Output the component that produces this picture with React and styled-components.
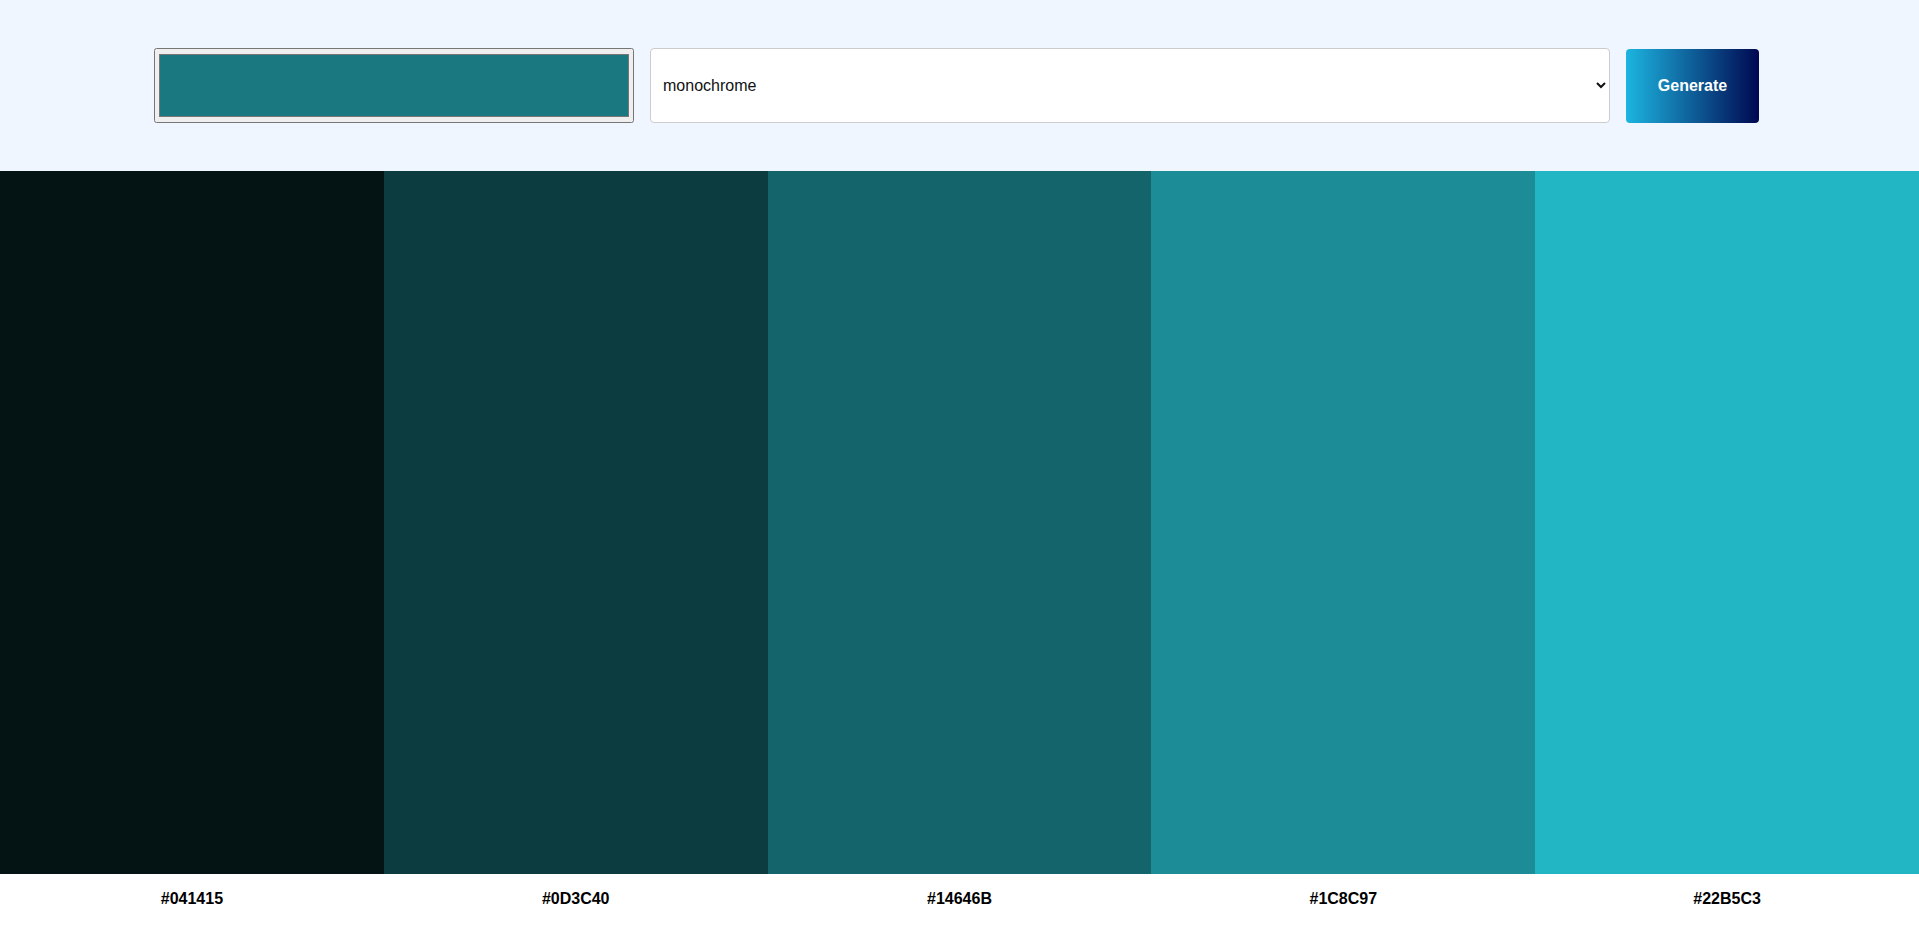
import React, { useState } from "react";
import styled, { createGlobalStyle } from "styled-components";

const GlobalStyle = createGlobalStyle`
  body {
    margin: 0;
    font-family: "Liberation Sans", Arial, sans-serif;
    background: #ffffff;
  }
`;

const palette = ["#041415", "#0D3C40", "#14646B", "#1C8C97", "#22B5C3"];

export default function App() {
  const [color, setColor] = useState("#1a7980");
  const [mode, setMode] = useState("monochrome");

  return (
    <>
      <GlobalStyle />
      <Header>
        <ColorPicker type="color" value={color} onChange={(e) => setColor(e.target.value)} />
        <ModeSelect value={mode} onChange={(e) => setMode(e.target.value)}>
          <option value="monochrome">monochrome</option>
          <option value="monochrome-dark">monochrome-dark</option>
          <option value="monochrome-light">monochrome-light</option>
          <option value="analogic">analogic</option>
          <option value="complement">complement</option>
          <option value="triad">triad</option>
        </ModeSelect>
        <GenerateButton>Generate</GenerateButton>
      </Header>
      <Palette>
        {palette.map((hex) => (
          <Column key={hex}>
            <Swatch $color={hex} />
            <HexLabel>{hex}</HexLabel>
          </Column>
        ))}
      </Palette>
    </>
  );
}

const Header = styled.header`
  background: #eff6ff;
  height: 171px;
  box-sizing: border-box;
  display: flex;
  align-items: center;
  justify-content: center;
  gap: 16px;
  padding-right: 6px;
`;

const ColorPicker = styled.input`
  width: 480px;
  height: 75px;
  margin: 0;
  cursor: pointer;
`;

const ModeSelect = styled.select`
  width: 960px;
  height: 75px;
  box-sizing: border-box;
  border: 1px solid #cccccc;
  border-radius: 4px;
  background: #ffffff;
  padding: 0 8px 0 8px;
  font-family: "Liberation Sans", Arial, sans-serif;
  font-size: 16px;
  color: #111111;
`;

const GenerateButton = styled.button`
  width: 133px;
  height: 74px;
  border: none;
  border-radius: 4px;
  background: linear-gradient(to right, #1cb5e0, #000851);
  color: #ffffff;
  font-family: "Liberation Sans", Arial, sans-serif;
  font-size: 16px;
  font-weight: bold;
  cursor: pointer;
`;

const Palette = styled.main`
  display: grid;
  grid-template-columns: repeat(5, 1fr);
`;

const Column = styled.div`
  display: flex;
  flex-direction: column;
`;

const Swatch = styled.div`
  height: 703px;
  background: ${(p) => p.$color};
`;

const HexLabel = styled.p`
  margin: 16px 0;
  text-align: center;
  font-size: 16px;
  font-weight: bold;
  color: #000000;
`;
